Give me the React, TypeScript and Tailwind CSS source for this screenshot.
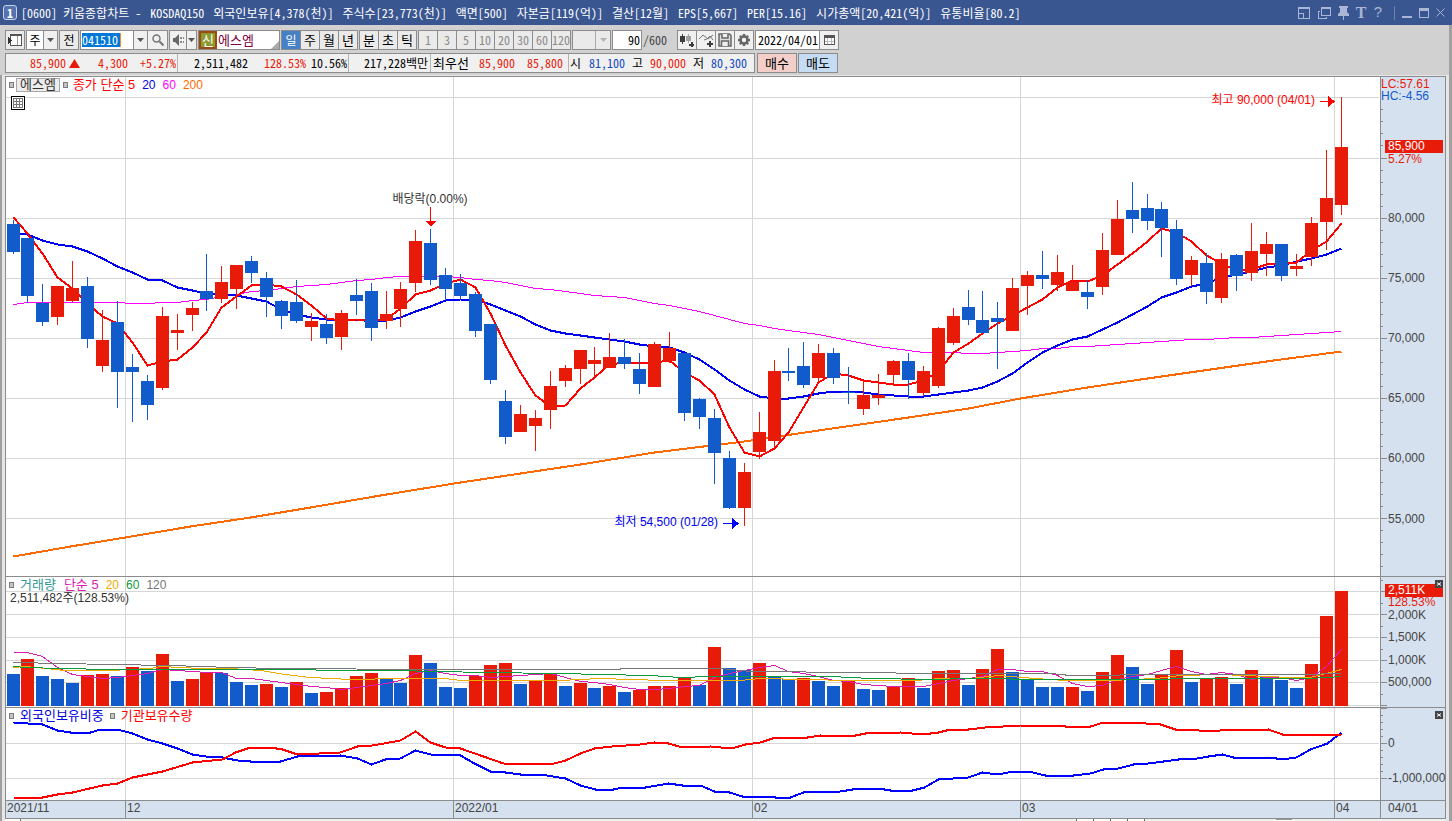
import React from "react";

const RED = "#e81b09";
const BLUE = "#125bcb";

type Side = "R" | "B";
type Candle = [Side, number, number, number, number];

/* side, high, body top, body bottom, low */
const candles: Candle[] = [
  ["B", 220, 224, 252, 254], ["B", 238, 238, 296, 303], ["B", 284, 303, 322, 326], ["R", 286, 286, 317, 325],
  ["R", 261, 288, 301, 302], ["B", 277, 286, 339, 348], ["R", 310, 340, 366, 372], ["B", 301, 322, 372, 408],
  ["B", 354, 367, 372, 422], ["B", 375, 381, 405, 420], ["R", 307, 316, 388, 390], ["R", 314, 330, 333, 350],
  ["R", 302, 308, 315, 331], ["B", 254, 291, 299, 311], ["R", 266, 282, 299, 303], ["R", 265, 265, 289, 309],
  ["B", 256, 261, 273, 283], ["B", 272, 278, 297, 317], ["B", 300, 301, 316, 329], ["B", 280, 302, 321, 323],
  ["R", 313, 321, 327, 341], ["B", 314, 324, 338, 344], ["R", 310, 313, 337, 350], ["B", 279, 295, 301, 315],
  ["B", 283, 291, 328, 341], ["R", 291, 314, 321, 329], ["R", 282, 289, 309, 327], ["R", 230, 241, 283, 292],
  ["B", 229, 243, 280, 285], ["B", 268, 275, 289, 300], ["B", 274, 283, 296, 299], ["B", 292, 294, 331, 337],
  ["B", 324, 324, 380, 384], ["B", 390, 401, 437, 444], ["R", 405, 414, 432, 432], ["R", 410, 418, 426, 451],
  ["R", 371, 386, 410, 429], ["R", 365, 368, 381, 387], ["R", 350, 350, 369, 384], ["R", 347, 360, 364, 377],
  ["R", 333, 357, 368, 368], ["B", 339, 357, 364, 369], ["B", 353, 369, 384, 394], ["R", 342, 344, 387, 387],
  ["R", 332, 348, 361, 363], ["B", 353, 353, 413, 421], ["B", 398, 399, 417, 429], ["B", 409, 418, 453, 484],
  ["B", 451, 458, 508, 509], ["R", 463, 472, 508, 526], ["R", 412, 432, 452, 459], ["R", 360, 371, 441, 447],
  ["B", 348, 371, 373, 381], ["B", 342, 366, 385, 388], ["R", 344, 353, 378, 382], ["B", 348, 353, 378, 384],
  ["B", 367, 392, 393, 404], ["R", 381, 395, 409, 415], ["R", 374, 395, 398, 405], ["R", 360, 361, 375, 386],
  ["B", 353, 361, 380, 399], ["R", 366, 371, 393, 396], ["R", 327, 328, 386, 388], ["R", 308, 316, 343, 345],
  ["B", 290, 307, 320, 325], ["B", 291, 320, 333, 333], ["B", 302, 318, 322, 369], ["R", 278, 288, 331, 331],
  ["R", 271, 275, 286, 315], ["B", 251, 275, 279, 289], ["R", 255, 272, 285, 291], ["R", 265, 282, 291, 291],
  ["B", 280, 292, 297, 309], ["R", 233, 250, 287, 295], ["R", 200, 219, 255, 255], ["B", 182, 210, 219, 233],
  ["B", 194, 208, 221, 230], ["B", 202, 209, 228, 257], ["B", 220, 229, 279, 285], ["R", 256, 260, 275, 286],
  ["B", 253, 263, 292, 304], ["R", 253, 259, 298, 303], ["B", 254, 255, 276, 291], ["R", 223, 251, 273, 281],
  ["R", 232, 244, 254, 276], ["B", 244, 244, 276, 281], ["R", 254, 266, 269, 276], ["R", 217, 223, 257, 266],
  ["R", 150, 198, 222, 250], ["R", 97, 147, 205, 215],
];

const ma5 = [217, 233, 253, 277, 288, 303, 316, 323, 342, 365, 361, 359, 347, 332, 307, 296, 285, 284, 286, 294, 305, 318, 320, 319, 319, 319, 308, 294, 290, 283, 279, 287, 313, 345, 372, 395, 406, 405, 388, 377, 364, 362, 363, 362, 360, 372, 380, 394, 427, 452, 456, 448, 432, 407, 382, 373, 375, 380, 382, 384, 384, 380, 371, 352, 343, 333, 323, 315, 307, 299, 287, 280, 281, 275, 264, 253, 241, 228, 232, 241, 255, 263, 270, 269, 264, 263, 262, 250, 241, 223];
const ma20 = [233, 234, 240, 244, 246, 251, 258, 266, 272, 279, 280, 287, 290, 293, 294, 295, 298, 301, 309, 314, 317, 319, 319, 319, 321, 320, 317, 311, 306, 300, 299, 299, 304, 310, 316, 324, 330, 333, 335, 337, 339, 341, 344, 346, 347, 352, 359, 369, 380, 389, 396, 398, 398, 396, 393, 391, 391, 392, 394, 395, 396, 396, 394, 392, 390, 387, 381, 373, 362, 352, 345, 339, 336, 329, 322, 314, 306, 297, 292, 286, 283, 277, 274, 271, 267, 265, 261, 258, 254, 248];
const ma60 = [304, 302, 302, 302, 302, 302, 302, 302, 303, 303, 302, 302, 300, 299, 296, 294, 291, 290, 288, 286, 285, 284, 282, 280, 279, 277, 276, 276, 276, 276, 277, 279, 280, 282, 285, 288, 289, 291, 293, 295, 296, 297, 300, 303, 305, 308, 311, 315, 319, 323, 325, 328, 330, 332, 334, 337, 340, 343, 346, 348, 350, 352, 352, 352, 353, 353, 352, 351, 350, 348, 348, 346, 346, 345, 344, 343, 342, 341, 340, 339, 339, 338, 337, 337, 336, 335, 334, 333, 332, 331];
const ma200 = "13,556 70,546 125,537 190,526 250,517 310,507 380,495 460,482 520,473 580,464 654,452 744,441 818,430 908,417 968,408 1020,398 1087,387 1140,379 1210,369 1273,360 1341,351";

const volume: [Side, number][] = [
  ["B", 674], ["R", 659], ["B", 676], ["B", 679], ["B", 683], ["R", 675], ["R", 674], ["B", 676], ["R", 667], ["B", 671],
  ["R", 654], ["B", 681], ["R", 679], ["R", 672], ["B", 673], ["B", 682], ["B", 685], ["R", 684], ["B", 687], ["R", 682],
  ["B", 693], ["R", 692], ["R", 688], ["R", 676], ["R", 673], ["B", 679], ["B", 683], ["R", 655], ["B", 663], ["B", 687],
  ["B", 688], ["R", 676], ["R", 665], ["R", 663], ["B", 684], ["R", 681], ["R", 673], ["B", 686], ["R", 683], ["B", 688],
  ["R", 686], ["B", 692], ["R", 690], ["R", 686], ["R", 686], ["R", 677], ["B", 685], ["R", 647], ["B", 668], ["B", 670],
  ["R", 663], ["B", 677], ["B", 679], ["R", 678], ["B", 681], ["B", 686], ["R", 681], ["B", 689], ["B", 690], ["R", 687],
  ["R", 678], ["B", 688], ["R", 671], ["R", 670], ["B", 685], ["R", 669], ["R", 649], ["B", 672], ["B", 680], ["B", 687],
  ["B", 687], ["R", 687], ["B", 691], ["R", 672], ["R", 655], ["B", 667], ["B", 684], ["R", 675], ["R", 650], ["B", 682],
  ["R", 679], ["R", 677], ["B", 684], ["R", 670], ["B", 676], ["B", 680], ["B", 688], ["R", 664], ["R", 616], ["R", 591],
];
const vma5 = [652, 652, 656, 667, 674, 676, 678, 677, 675, 673, 669, 670, 671, 672, 672, 678, 678, 680, 682, 684, 686, 687, 689, 687, 685, 683, 680, 673, 670, 673, 675, 675, 677, 676, 675, 674, 673, 677, 681, 682, 684, 687, 689, 689, 688, 686, 685, 677, 673, 670, 667, 665, 671, 673, 676, 680, 681, 684, 685, 686, 686, 686, 683, 680, 678, 676, 669, 669, 671, 671, 675, 683, 686, 685, 679, 676, 674, 670, 666, 671, 674, 672, 674, 679, 677, 677, 680, 677, 666, 649];
const vma20 = "13,667 25,666 65,670 110,670 150,668 160,666 200,668 230,668 260,670 285,674 310,677 350,679 400,678 445,678 460,680 560,680 600,678 630,679 665,680 740,680 760,678 850,680 915,680 940,678 970,678 998,675 1035,678 1065,680 1110,680 1155,678 1180,675 1220,674 1290,677 1310,677 1341,669";
const vma60 = "13,666 25,667 60,668 110,669 240,669 390,670 440,671 483,672 560,673 600,674 650,675 680,677 710,676 830,676 870,678 930,679 970,678 1050,679 1140,679 1200,678 1310,678 1341,676";
const vma120 = "13,662 110,664 170,665 230,667 280,668 430,669 540,669 700,668 720,668 750,671 860,672 930,673 1050,673 1070,675 1170,674 1300,674 1341,673";

const foreign = "13,722 27,723 42,724 57,730 70,732 90,732 100,729 117,729 132,733 147,739 162,743 177,748 192,754 205,756 222,757 237,760 250,761 280,761 297,756 340,755 357,758 371,764 385,759 400,758 415,750 430,754 460,755 474,763 490,771 505,772 520,774 540,774 565,778 580,785 595,789 613,789 622,787 645,787 668,783 682,785 700,785 714,791 729,792 742,796 760,796 775,797 790,797 803,792 840,791 858,788 878,788 890,790 912,790 924,787 938,779 968,777 982,772 997,774 1013,771 1028,771 1045,775 1073,775 1090,773 1103,769 1118,768 1133,764 1148,763 1178,759 1197,758 1208,756 1222,754 1233,757 1270,757 1282,759 1296,757 1310,749 1327,743 1341,732";
const institution = "13,797 42,797 57,794 72,792 102,785 117,783 132,777 162,771 192,762 222,759 235,752 250,747 270,747 282,749 297,754 340,752 357,746 372,745 400,740 415,731 430,742 445,747 460,748 483,756 503,763 550,764 565,760 580,753 594,748 612,746 640,744 654,742 668,743 682,747 710,746 731,748 745,744 760,742 775,737 807,737 820,735 850,736 865,733 900,732 922,734 938,732 950,729 968,729 985,727 1020,725 1055,725 1065,726 1090,726 1103,722 1130,722 1160,724 1175,729 1192,729 1205,731 1220,730 1268,729 1282,734 1325,734 1341,735";

const LEFT = 6;
const WIDTH = 1374;
const months = [125, 453, 752, 1020, 1334];

const barX = (i: number) => Math.floor(13 + i * 14.922);
const toPoints = (ys: number[]) => ys.map((y, i) => `${barX(i)},${y}`).join(" ");
const pct = (x: number) => `${((x - LEFT) / WIDTH) * 100}%`;

function Plot({ top, height, grid, children, label }: { top: number; height: number; grid: number[]; children: React.ReactNode; label: string }) {
  return (
    <svg className="block w-full" height={height} viewBox={`${LEFT} ${top} ${WIDTH} ${height}`} preserveAspectRatio="none" shapeRendering="crispEdges" role="img" aria-label={label}>
      {grid.map((y) => <rect key={y} x={LEFT} y={y} width={WIDTH - 1} height={1} fill="#d6d6d6" />)}
      {months.map((x) => <rect key={x} x={x} y={top} width={1} height={height} fill="#d6d6d6" />)}
      {children}
    </svg>
  );
}

function Line({ points, color, width = 1 }: { points: string; color: string; width?: number }) {
  return <polyline points={points} fill="none" stroke={color} strokeWidth={width} transform="translate(0.5 0.5)" />;
}

function Ticks({ top, height, major, minor }: { top: number; height: number; major: number[]; minor: number[] }) {
  return (
    <svg className="block" width={7} height={height} viewBox={`0 ${top} 7 ${height}`} shapeRendering="crispEdges" aria-hidden="true">
      {major.map((y) => <rect key={y} x={0} y={y} width={6} height={1} fill="#8c8c8c" />)}
      {minor.map((y) => <rect key={y} x={0} y={y} width={2} height={1} fill="#8c8c8c" />)}
    </svg>
  );
}

function ScaleText({ top, at, text, className = "text-[#444]" }: { top: number; at: number; text: string; className?: string }) {
  return <span className={`absolute left-[7px] leading-3 whitespace-nowrap ${className}`} style={{ top: at - top - 6 }}>{text}</span>;
}

function Marker() {
  return <span className="block h-[6px] w-[5px] shrink-0 border border-[#7c7c7c] bg-[#c4c4c4]" />;
}

function CloseBox({ label }: { label: string }) {
  return (
    <button aria-label={label} className="absolute top-[3px] right-[2px] flex size-2 items-center justify-center bg-[#444]">
      <svg width="6" height="6" viewBox="0 0 6 6" aria-hidden="true"><path d="M1 1.500 5 4.500M5 1.500 1 4.500" stroke="#fff" /></svg>
    </button>
  );
}

const cell = "flex items-center justify-center border border-[#8c8c8c]";

function Down({ color = "#555" }: { color?: string }) {
  return <svg width="7" height="4" viewBox="0 0 7 4" aria-hidden="true"><path d="M0 0h7L3.500 4z" fill={color} /></svg>;
}

const titleParts = ["[0600] 키움종합차트 -", "KOSDAQ150", "외국인보유[4,378(천)]", "주식수[23,773(천)]", "액면[500]", "자본금[119(억)]", "결산[12월]", "EPS[5,667]", "PER[15.16]", "시가총액[20,421(억)]", "유통비율[80.2]"];

function TitleBar() {
  const b = "flex h-4 items-center justify-center";
  return (
    <header className="flex h-[25px] items-center bg-[#3a5691] text-white">
      <span className="ml-[3px] flex h-[15px] w-[14px] items-center justify-center rounded-[3px] border border-[#c9d3ea] bg-[#5673ae] text-[12px] font-bold">1</span>
      <h1 className="ml-1 flex min-w-0 flex-1 gap-[9px] overflow-hidden text-[12px] whitespace-nowrap">
        {titleParts.map((t) => <span key={t}>{t}</span>)}
      </h1>
      <div className="flex items-center gap-[7px] pr-[7px] text-[#a9b6d6]">
        <button aria-label="화면 분리" className={`${b} w-3`}>
          <svg width="12" height="12" viewBox="0 0 12 12" fill="none" stroke="currentColor" shapeRendering="crispEdges" aria-hidden="true"><path d="M.5.5h11v11H.5zM.5 6.500h5v5M0 1.500h12" /></svg>
        </button>
        <button aria-label="창 복제" className={`${b} w-[14px]`}>
          <svg width="13" height="12" viewBox="0 0 13 12" fill="none" stroke="currentColor" shapeRendering="crispEdges" aria-hidden="true"><path d="M3.500.5h9v8h-9zM3 1.500h10M.5 4v7.500h8V10M.5 4.500H2" /></svg>
        </button>
        <button aria-label="고정" className={`${b} w-[11px]`}>
          <svg width="11" height="14" viewBox="0 0 11 14" fill="currentColor" aria-hidden="true"><path d="M1 0h9v2H9v4l2 2v2H6v4H5v-4H0V8l2-2V2H1z" /></svg>
        </button>
        <button aria-label="글꼴" className={`${b} w-[10px] font-['Liberation_Serif',serif] text-[16px] font-bold`}>T</button>
        <button aria-label="도움말" className={`${b} w-[10px] font-['Liberation_Sans',sans-serif] text-[15px]`}>?</button>
        <span className="ml-1 h-[14px] w-px bg-[#7183a8]" />
        <button aria-label="최소화" className={`${b} w-[10px]`}>
          <svg width="10" height="12" viewBox="0 0 10 12" fill="currentColor" shapeRendering="crispEdges" aria-hidden="true"><path d="M0 9h10v2H0z" /></svg>
        </button>
        <button aria-label="최대화" className={`${b} w-[10px]`}>
          <svg width="10" height="10" viewBox="0 0 10 10" fill="none" stroke="currentColor" shapeRendering="crispEdges" aria-hidden="true"><path d="M.5.5h9v9h-9zM0 1.500h10M0 2.500h10" /></svg>
        </button>
        <button aria-label="닫기" className={`${b} w-[9px]`}>
          <svg width="9" height="9" viewBox="0 0 9 9" fill="none" stroke="currentColor" aria-hidden="true"><path d="m.5.5 8 8m0-8-8 8" /></svg>
        </button>
      </div>
    </header>
  );
}

function ButtonGroup({ items, active, dim }: { items: string[]; active?: string; dim?: boolean }) {
  return (
    <div className="flex h-5 border-y border-r border-[#8c8c8c]">
      {items.map((t) => (
        <button key={t} className={`w-[19px] border-l border-[#8c8c8c] text-center ${t === active ? "bg-[#4681c5] text-white" : dim ? "bg-[#eaeaea] text-[#8a8a8a]" : "bg-[#eaeaea] text-[13px] text-black"}`}>{t}</button>
      ))}
    </div>
  );
}

function ToolIcon({ label, children }: { label: string; children: React.ReactNode }) {
  return <button aria-label={label} className="flex w-[19px] items-center justify-center border-l border-[#8c8c8c] bg-[#f0f0f0]">{children}</button>;
}

function Toolbar() {
  return (
    <div className="flex h-5 text-[12px] leading-[18px] whitespace-nowrap">
      <button aria-label="종목 목록" className={`${cell} mr-px w-5 bg-[#eaeaea]`}>
        <svg width="14" height="12" viewBox="0 0 14 12" shapeRendering="crispEdges" aria-hidden="true"><path d="M2.500 11.500v-11h11v11z" fill="#fff" stroke="#555" /><path d="M2 0h12v2H2z" fill="#555" /><path d="M9.500 2v9" stroke="#999" /><path d="M0 3v7l4-3.500z" fill="#333" /></svg>
      </button>
      <button className={`${cell} w-[18px] bg-white`}>주</button>
      <button aria-label="유형 선택" className={`${cell} mr-px w-[14px] border-l-0 bg-[#f0f0f0]`}><Down /></button>
      <button className={`${cell} mr-px w-5 bg-[#eaeaea]`}>전</button>
      <label className={`${cell} w-[54px] justify-start bg-white pl-px`}>
        <input aria-label="종목코드" defaultValue="041510" className="h-3.5 w-[39px] border-r border-[#ff8c1a] bg-[#0078d7] text-white outline-none" />
      </label>
      <button aria-label="종목코드 목록" className={`${cell} w-[14px] border-l-0 bg-[#f0f0f0]`}><Down /></button>
      <button aria-label="종목 검색" className={`${cell} mr-px w-5 border-l-0 bg-[#f0f0f0]`}>
        <svg width="12" height="12" viewBox="0 0 12 12" fill="none" stroke="#777" aria-hidden="true"><circle cx="4.500" cy="4.500" r="3.500" strokeWidth="1.500" /><path d="m7.500 7.500 4 4" strokeWidth="2" /></svg>
      </button>
      <button aria-label="음성" className={`${cell} w-[18px] bg-[#f0f0f0]`}>
        <svg width="13" height="12" viewBox="0 0 13 12" aria-hidden="true"><path d="M1 4h2l4-4v12L3 8H1z" fill="#666" /><path d="M8 3h2v2H8zM11 3h1v2h-1zM8 7h2v2H8zM11 7h1v2h-1z" fill="#888" /></svg>
      </button>
      <button aria-label="음성 선택" className={`${cell} mr-px w-[10px] border-l-0 bg-[#f0f0f0]`}><Down /></button>
      <div className="mr-px flex w-[82px] border border-[#8c8c8c] bg-white text-[13px] text-[#7a0040]">
        <span className="flex w-[18px] items-center justify-center border-2 border-[#9a4a14] bg-[#8c9a2e] leading-3 text-white">신</span>
        <span className="flex-1 pl-px">에스엠</span>
        <svg className="self-end" width="8" height="8" viewBox="0 0 8 8" aria-hidden="true"><path d="M8 0v8H0z" fill="#aaa" /></svg>
      </div>
      <div className="mr-px"><ButtonGroup items={["일", "주", "월", "년"]} active="일" /></div>
      <div className="mr-px"><ButtonGroup items={["분", "초", "틱"]} /></div>
      <div className="mr-px"><ButtonGroup items={["1", "3", "5", "10", "20", "30", "60", "120"]} dim /></div>
      <button aria-label="주기 입력" disabled className="mr-px flex w-[39px] border border-[#8c8c8c] bg-[#eaeaea]">
        <span className="h-full flex-1 border-r border-[#a8a8a8]" />
        <span className="flex h-full w-[14px] items-center justify-center"><Down color="#b4b4b4" /></span>
      </button>
      <input aria-label="표시 봉 수" defaultValue="90" className="w-[30px] border border-[#8c8c8c] bg-white pr-px text-right" />
      <span className="w-[35px] pt-px pl-px text-[#444]">/600</span>
      <div className="mr-px flex border-y border-r border-[#8c8c8c]">
        <ToolIcon label="차트 유형 추가">
          <svg width="15" height="15" viewBox="0 0 15 15" shapeRendering="crispEdges" aria-hidden="true"><path d="M0 3h5v6H0zM2 1h1v10H2z" fill="#3c3c3c" /><path d="M6 3h5v5H6zM8 1h1v9H8z" fill="#a0a0a0" /><path d="M11 9h2v5h-2zM9 11h5v2H9z" fill="#3c3c3c" /></svg>
        </ToolIcon>
        <ToolIcon label="지표 추가">
          <svg width="15" height="15" viewBox="0 0 15 15" fill="none" aria-hidden="true"><path d="m0 6 4-4 5 4 5-4M5 7l3-1 3-3 3 4" stroke="#777" /><path d="M11 8v6M8 11h6" stroke="#3c3c3c" strokeWidth="2" /></svg>
        </ToolIcon>
        <ToolIcon label="저장">
          <svg width="14" height="14" viewBox="0 0 14 14" fill="#ddd" stroke="#666" strokeWidth="1.500" aria-hidden="true"><path d="M1 1h10.500L13 2.500V13H1z" /><path d="M4 1v4h6V1M3.500 13V8h7v5" fill="#eee" /></svg>
        </ToolIcon>
        <ToolIcon label="설정">
          <svg width="14" height="14" viewBox="0 0 14 14" fill="none" stroke="#666" aria-hidden="true"><circle cx="7" cy="7" r="3.500" strokeWidth="2.500" /><path d="M7 1v2M7 11v2M1 7h2M11 7h2M2.800 2.800l1.400 1.400M9.800 9.800l1.400 1.400M11.200 2.800 9.800 4.200M4.200 9.800l-1.400 1.400" strokeWidth="2.500" /></svg>
        </ToolIcon>
      </div>
      <input aria-label="기준일" defaultValue="2022/04/01" className="w-[65px] border border-[#8c8c8c] bg-white pl-[2px]" />
      <button aria-label="달력" className={`${cell} w-[19px] border-l-0 bg-[#f0f0f0]`}>
        <svg width="11" height="10" viewBox="0 0 11 10" shapeRendering="crispEdges" aria-hidden="true"><path d="M.5.5h10v9H.5z" fill="#fff" stroke="#555" /><path d="M0 0h11v3H0z" fill="#555" /><path d="M1 6.500h9M3.500 3v6M7.500 3v6" stroke="#bbb" /></svg>
      </button>
    </div>
  );
}

function QuoteBar() {
  const sep = "border-r border-[#b4b4b4]";
  const up = "text-right text-[#e81b09]";
  const dn = "text-right text-[#1148c0]";
  return (
    <div className="flex h-5 text-[12px] leading-[18px] whitespace-nowrap">
      <div className="flex w-[750px] border border-[#8c8c8c] bg-[#f0f0f0]">
        <span className={`${up} w-[60px]`}>85,900</span>
        <span className="flex w-[14px] items-center justify-end"><svg width="11" height="9" viewBox="0 0 11 9" aria-hidden="true"><path d="M5.500 0 11 9H0z" fill={RED} /></svg></span>
        <span className={`${up} w-12`}>4,300</span>
        <span className={`${up} ${sep} w-[50px] pr-px`}>+5.27%</span>
        <span className="w-[70px] text-right">2,511,482</span>
        <span className={`${up} w-[58px]`}>128.53%</span>
        <span className={`${sep} w-[43px] pr-px text-right`}>10.56%</span>
        <span className={`${sep} w-[82px] pr-[2px] text-right`}>217,228백만</span>
        <span className="w-[38px] pl-[2px] text-[13px]">최우선</span>
        <span className={`${up} w-[46px]`}>85,900</span>
        <span className={`${up} ${sep} w-[54px] pr-[5px]`}>85,800</span>
        <span className="w-3 pl-px">시</span>
        <span className={`${dn} w-[44px]`}>81,100</span>
        <span className="w-[18px] text-right">고</span>
        <span className={`${up} w-[43px]`}>90,000</span>
        <span className="w-[18px] text-right">저</span>
        <span className={`${dn} w-[43px]`}>80,300</span>
      </div>
      <button className="ml-[2px] w-10 border border-[#8c8c8c] bg-[#f4cfca] text-[13px]">매수</button>
      <button className="ml-px w-10 border border-[#8c8c8c] bg-[#c6dcf2] text-[13px]">매도</button>
    </div>
  );
}

const axis = "relative w-[65px] shrink-0 border-l border-[#8c8c8c] bg-[#d6e1f0]";
const legend = "absolute left-[3px] flex items-center leading-3 whitespace-nowrap";

function PricePanel() {
  const top = 77;
  const scale: [number, string][] = [[218, "80,000"], [278, "75,000"], [338, "70,000"], [398, "65,000"], [458, "60,000"], [519, "55,000"]];
  const majors = [97, 158, 218, 278, 338, 398, 458, 518];
  const minors = majors.flatMap((y) => [12, 24, 36, 48].map((d) => y + d)).filter((y) => y < 574);
  return (
    <section className="flex border-b border-[#8c8c8c]">
      <div className="relative min-w-0 flex-1 bg-white">
        <Plot top={top} height={499} grid={majors} label="일봉 차트">
          <Line points={ma200} color="#ff6a00" width={2} />
          <Line points={toPoints(ma60)} color="#ff00ff" />
          <Line points={toPoints(ma20)} color="#0000f0" width={2} />
          <Line points={toPoints(ma5)} color="#ff0000" width={2} />
          {candles.map(([s, hi, a, b, lo], i) => (
            <g key={i} fill={s === "R" ? RED : BLUE}>
              <rect x={barX(i)} y={hi} width={1} height={lo - hi} />
              <rect x={barX(i) - 6} y={a} width={13} height={b - a} />
            </g>
          ))}
          <path d="M430 207h1v14h5l-5 6-6-6h5z" fill="#f00" />
          <path d="M1320 101h8v-5l7 5.500-7 5.500v-5h-8z" fill="#f00" />
          <path d="M723 523h9v-5l7 5.500-7 5.500v-5h-9z" fill="#00f" />
        </Plot>
        <div className={`${legend} top-[1px]`}>
          <Marker />
          <span className="ml-[2px] border border-[#a8a8a8] bg-[#ececec] px-[3px] text-[13px] text-[#333]">에스엠</span>
          <span className="ml-[3px]"><Marker /></span>
          <span className="ml-[5px] text-[13px] text-[#f00]">종가 단순 5</span>
          <span className="ml-[7px] text-[#0000e0]">20</span>
          <span className="ml-[7px] text-[#f0f]">60</span>
          <span className="ml-[7px] text-[#ff6a00]">200</span>
        </div>
        <button aria-label="시세표" className="absolute top-[19px] left-[5px] flex size-[14px] items-center justify-center border border-black bg-white">
          <svg width="10" height="10" viewBox="0 0 10 10" fill="none" stroke="#777" shapeRendering="crispEdges" aria-hidden="true"><path d="M.5.500h9v9h-9zM0 3.500h10M0 6.500h10M3.500 0v10M6.500 0v10" /></svg>
        </button>
        <span className="absolute -translate-x-1/2 leading-3 whitespace-nowrap text-[#333]" style={{ left: pct(430), top: 116 }}>배당락(0.00%)</span>
        <span className="absolute -translate-x-full leading-3 whitespace-nowrap text-[#f00]" style={{ left: pct(1315), top: 17 }}>최고 90,000 (04/01)</span>
        <span className="absolute -translate-x-full leading-3 whitespace-nowrap text-[#0000f0]" style={{ left: pct(718), top: 439 }}>최저 54,500 (01/28)</span>
      </div>
      <div className={axis}>
        <Ticks top={top} height={499} major={majors.slice(1)} minor={minors} />
        <span className="absolute top-[1px] left-0 leading-3 text-[#e81b09]">LC:57.61<br /><span className="text-[#125bcb]">HC:-4.56</span></span>
        <ScaleText top={top} at={159} text="5.27%" className="text-[#e81b09]" />
        <span className="absolute top-[63px] right-[2px] left-1 h-[13px] bg-[#e81b09] pl-[3px] leading-[13px] text-white">85,900</span>
        {scale.map(([y, t]) => <ScaleText key={t} top={top} at={y} text={t} />)}
      </div>
    </section>
  );
}

function VolumePanel() {
  const top = 577;
  const majors = [591, 614, 637, 660, 682, 705];
  return (
    <section className="flex border-b border-[#8c8c8c]">
      <div className="relative min-w-0 flex-1 bg-white">
        <Plot top={top} height={130} grid={majors} label="거래량 차트">
          {volume.map(([s, y], i) => <rect key={i} x={barX(i) - 6} y={y} width={13} height={706 - y} fill={s === "R" ? RED : BLUE} />)}
          <Line points={toPoints(vma5)} color="#dd1cb4" />
          <Line points={vma20} color="#f0ab00" />
          <Line points={vma60} color="#0b9a3c" />
          <Line points={vma120} color="#777" />
        </Plot>
        <div className={`${legend} top-[2px]`}>
          <Marker />
          <span className="ml-[6px] text-[13px] text-[#2d9696]">거래량</span>
          <span className="ml-2 text-[13px] text-[#dd1cb4]">단순 5</span>
          <span className="ml-[7px] text-[#f0ab00]">20</span>
          <span className="ml-[7px] text-[#0b9a3c]">60</span>
          <span className="ml-[7px] text-[#777]">120</span>
        </div>
        <div className={`${legend} top-[15px] pl-px text-[#333]`}>2,511,482주(128.53%)</div>
      </div>
      <div className={axis}>
        <Ticks top={top} height={130} major={majors} minor={[580, 603, 626, 649, 671, 694]} />
        <ScaleText top={top} at={615} text="2,000K" />
        <ScaleText top={top} at={637} text="1,500K" />
        <ScaleText top={top} at={660} text="1,000K" />
        <ScaleText top={top} at={682} text="500,000" />
        <span className="absolute top-5 left-[7px] h-[11px] bg-[#d6e1f0] leading-[11px] text-[#e81b09]">128.53%</span>
        <span className="absolute top-[7px] right-[2px] left-1 h-[13px] bg-[#e81b09] pl-[3px] leading-[13px] text-white">2,511K</span>
        <CloseBox label="거래량 닫기" />
      </div>
    </section>
  );
}

function HoldingPanel() {
  const top = 708;
  return (
    <section className="flex border-b border-[#8c8c8c]">
      <div className="relative min-w-0 flex-1 bg-white">
        <Plot top={top} height={92} grid={[743, 778]} label="보유 비중 차트">
          <Line points={foreign} color="#0000ff" width={2} />
          <Line points={institution} color="#ff0000" width={2} />
        </Plot>
        <div className={`${legend} top-[2px] text-[13px]`}>
          <Marker />
          <span className="ml-[6px] text-[#0000e0]">외국인보유비중</span>
          <span className="ml-[6px]"><Marker /></span>
          <span className="ml-[6px] text-[#f00]">기관보유수량</span>
        </div>
      </div>
      <div className={axis}>
        <Ticks top={top} height={92} major={[708, 743, 778]} minor={[715, 722, 729, 736, 750, 757, 764, 771]} />
        <ScaleText top={top} at={743} text="0" />
        <ScaleText top={top} at={778} text="-1,000,000" />
        <CloseBox label="보유 비중 닫기" />
      </div>
    </section>
  );
}

function TimeAxis() {
  const labels: [number, string][] = [[125, "12"], [453, "2022/01"], [752, "02"], [1020, "03"], [1334, "04"]];
  return (
    <div className="flex h-[18px] border-b border-[#8c8c8c] bg-[#d6e1f0] leading-[15px] text-[#444]">
      <div className="relative min-w-0 flex-1 pl-px">
        2021/11
        {labels.map(([x, t]) => (
          <span key={t} className="absolute top-0 h-full border-l border-[#8c8c8c] pl-px" style={{ left: pct(x) }}>{t}</span>
        ))}
      </div>
      <div className="w-[65px] border-l border-[#8c8c8c] pl-[7px]">04/01</div>
    </div>
  );
}

function BottomStrip() {
  return (
    <div className="flex h-[2px] bg-[#f0f0f0]">
      <span className="w-4 border-r border-[#777] bg-white" />
      <span className="flex-1" />
      {[0, 1, 2, 3].map((n) => <span key={n} className="w-[17px] border-l border-[#666] bg-white" />)}
      <span className="w-[132px] border-l border-[#666]" />
      <span className="w-4 border-t border-[#999] bg-white" />
      <span className="w-[154px]" />
    </div>
  );
}

export default function App() {
  return (
    <div className="bg-[#d1d1d1] font-['Noto_Sans_Mono_CJK_KR','Noto_Sans_CJK_KR',sans-serif] text-black">
      <TitleBar />
      <div className="flex flex-col gap-[3px] border-r-[3px] border-[#a0a0a0] pt-[5px] pb-[2px] pl-[5px]">
        <Toolbar />
        <QuoteBar />
      </div>
      <div className="border-r-[3px] border-l-2 border-[#a0a0a0] bg-[#e6e6e6] pt-px pr-[3px] pl-[3px]">
        <main className="border-x border-t border-[#8c8c8c] font-['Liberation_Sans','Noto_Sans_CJK_KR',sans-serif] text-[12px]">
          <PricePanel />
          <VolumePanel />
          <HoldingPanel />
          <TimeAxis />
        </main>
        <BottomStrip />
      </div>
    </div>
  );
}
